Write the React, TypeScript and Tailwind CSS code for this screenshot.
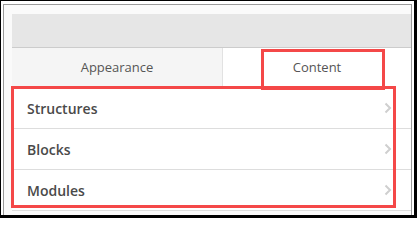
const rows = ["Structures", "Blocks", "Modules"];

function Chevron() {
  return (
    <svg width="8" height="12" viewBox="0 0 8 12" fill="none">
      <path d="M1.5 1.5 L6 6 L1.5 10.5" stroke="#cfcfcf" strokeWidth="2" />
    </svg>
  );
}

export default function App() {
  return (
    <div
      className="relative w-[417px] h-[218px] overflow-hidden bg-white border-black border-t border-l border-r-[3px] border-b-[3px] pt-[3px] pl-[2px] pr-[2px]"
      style={{ fontFamily: '"Open Sans", "Noto Sans", sans-serif' }}
    >
      <div className="h-full border-t border-l border-r border-[#9a9a9a] bg-[#fafafa] pl-2 pt-[9px]">
        <div className="h-[34px] bg-[#e6e6e6] border-b border-[#cccccc]" />
        <div className="flex h-10">
          <div className="w-[211px] flex items-center justify-center bg-[#f5f5f5] border-r border-[#e2e2e2] text-[13px] text-[#555]">
            Appearance
          </div>
          <div className="flex-1 flex items-center justify-center bg-white text-[13px] text-[#555]">
            Content
          </div>
        </div>
        <div className="bg-white">
          {rows.map((r) => (
            <div
              key={r}
              className="h-[41px] flex items-center justify-between border-b border-[#dddddd] pl-[15px] pr-[19px]"
            >
              <span className="text-[14px] font-semibold text-[#4a4a4a]">{r}</span>
              <Chevron />
            </div>
          ))}
        </div>
      </div>
      <div className="absolute left-[260px] top-[48px] w-[124px] h-[41px] border-[3px] border-[#f44848]" />
      <div className="absolute left-[10px] top-[85px] w-[385px] h-[122px] border-[3px] border-[#f44848]" />
    </div>
  );
}
